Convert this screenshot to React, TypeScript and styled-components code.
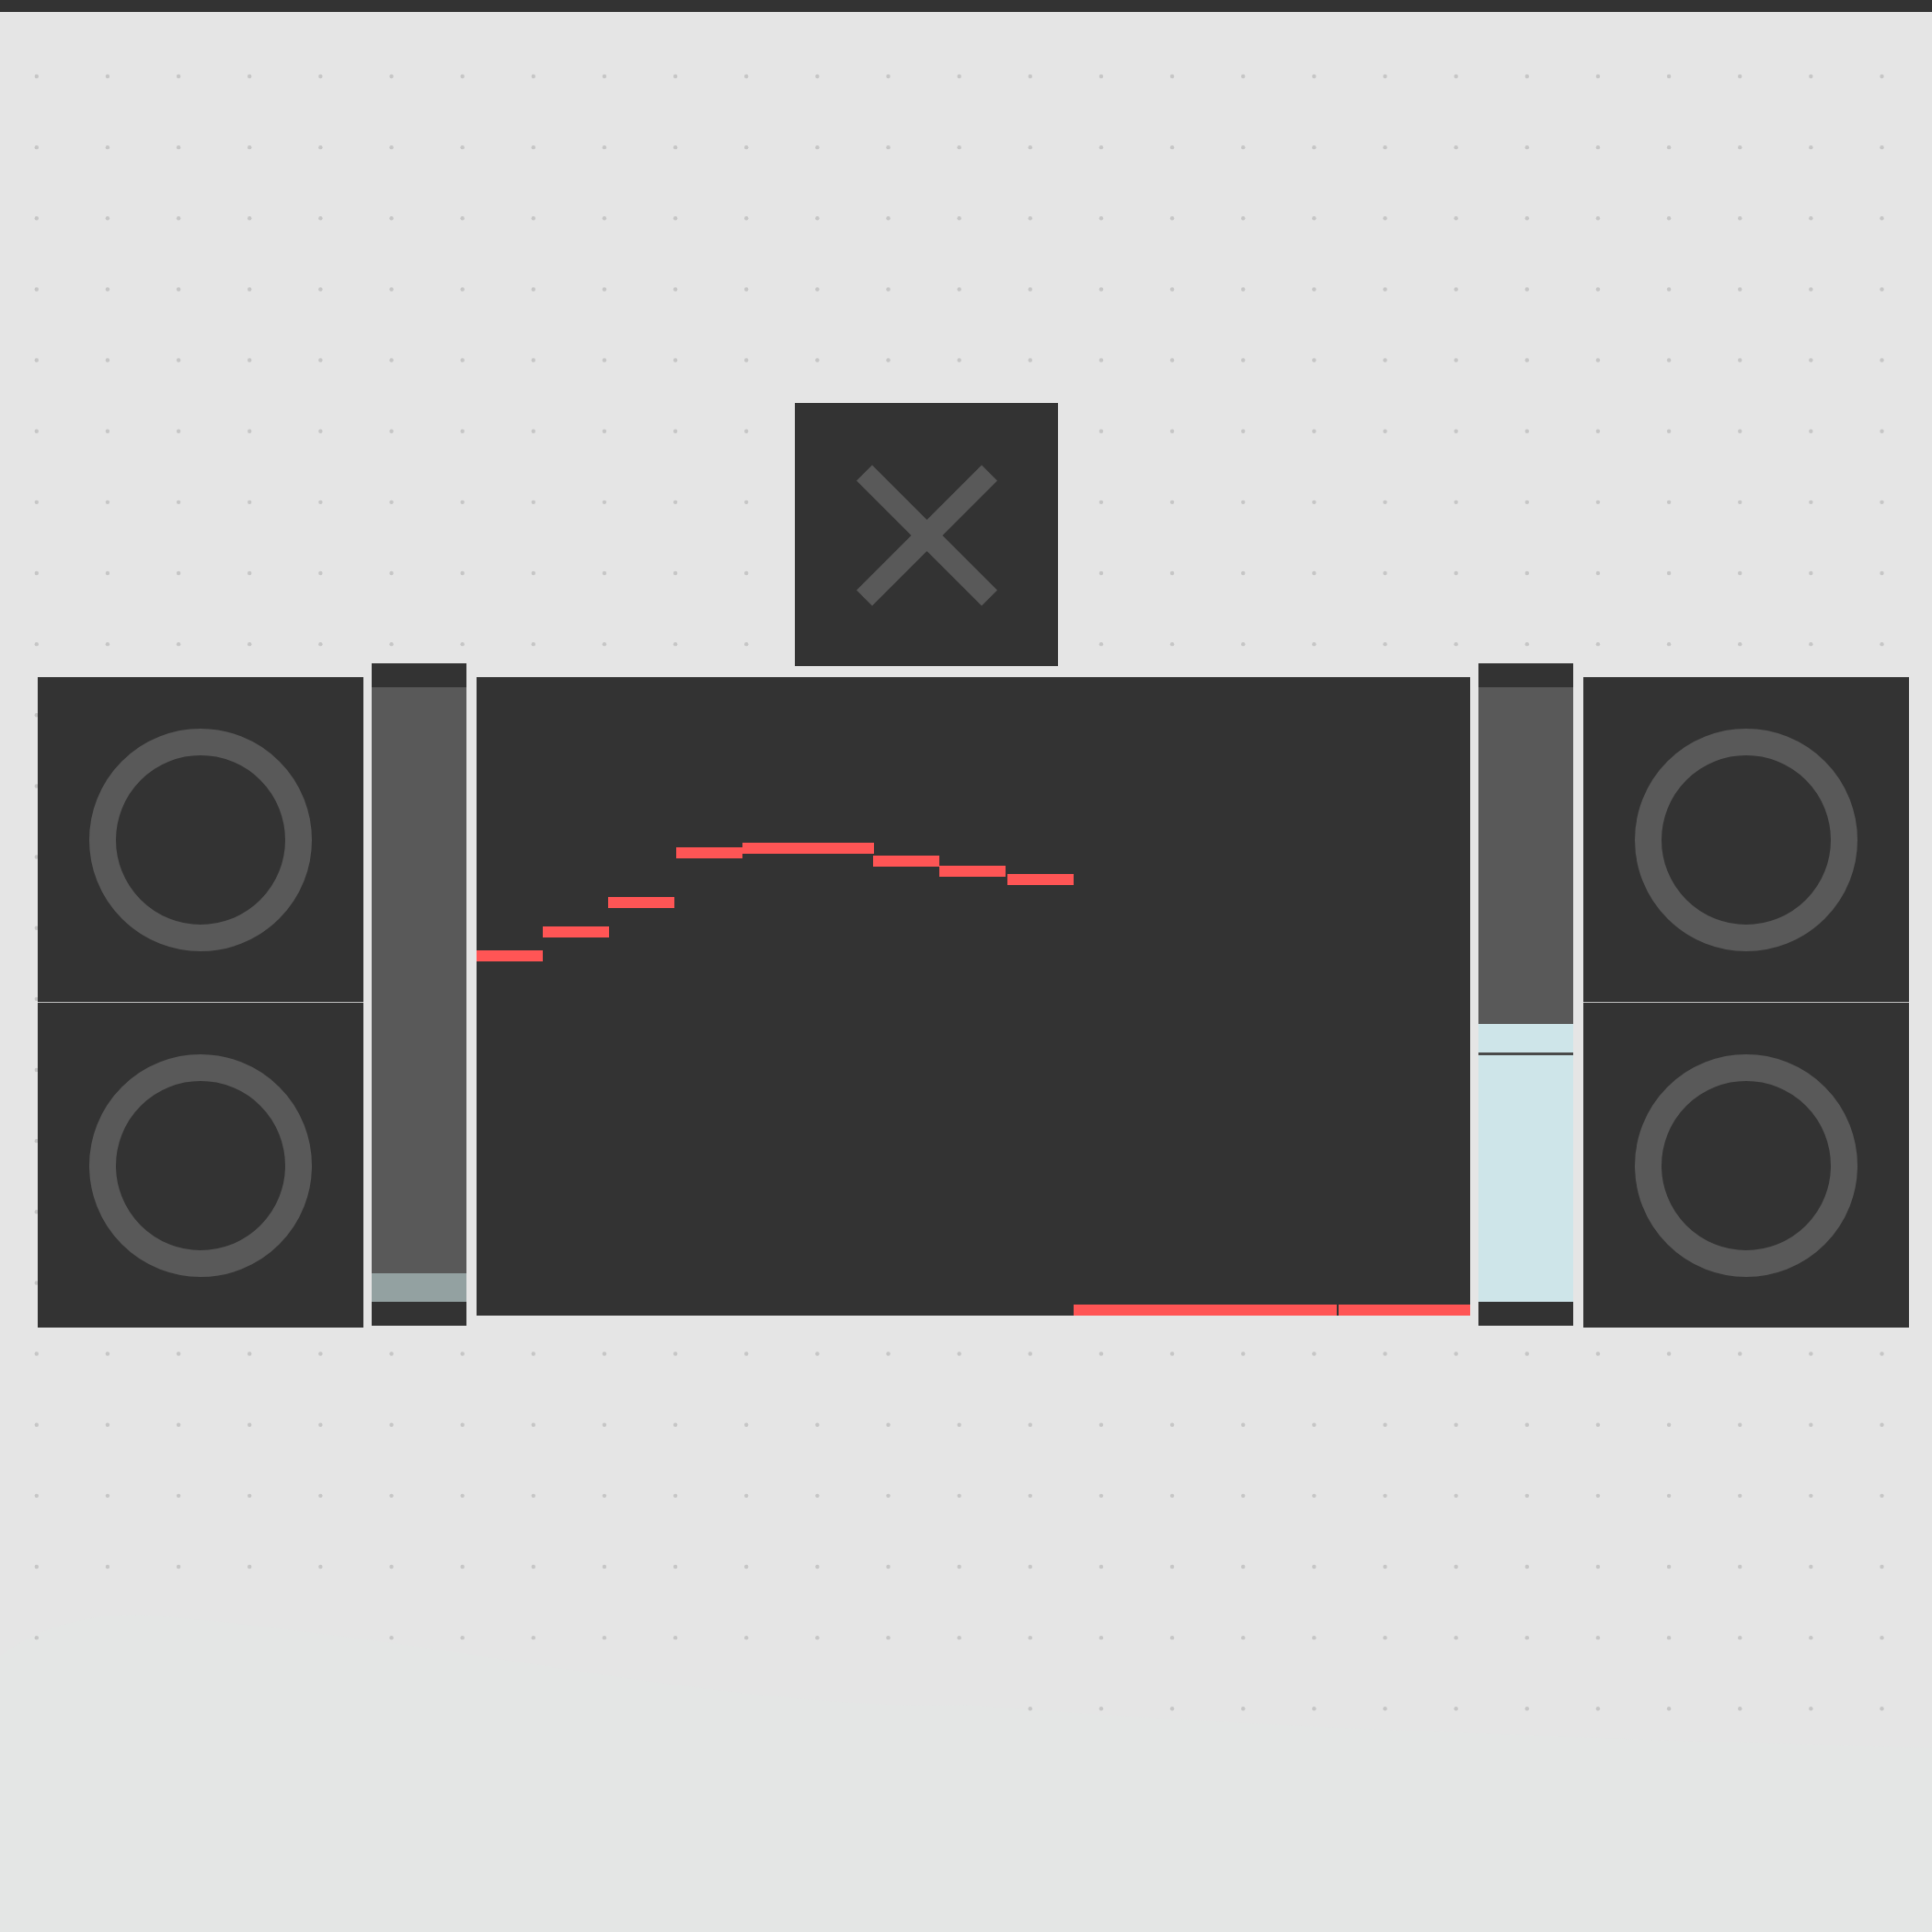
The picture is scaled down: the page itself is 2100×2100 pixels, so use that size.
import React, { useState } from "react";
import styled, { createGlobalStyle } from "styled-components";

const color = {
  page: "#e5e5e5",
  tint: "#e4e6e5",
  dot: "#c6c6c6",
  panel: "#333333",
  shape: "#595959",
  seam: "#c0c1c0",
  mark: "#4a4a4a",
  line: "#ff5555",
  fill: "#cee5e9",
  fillDim: "#93a1a1",
};

const GlobalStyle = createGlobalStyle`
  *, *::before, *::after { box-sizing: border-box; }
  body {
    margin: 0;
    background: ${color.page};
    font-family: "Liberation Sans", Arial, sans-serif;
  }
`;

const Page = styled.main`
  position: relative;
  min-height: 100vh;
  overflow: hidden;
  background: ${color.page};
`;

const Backdrop = styled.svg`
  position: absolute;
  inset: 0;
  width: 100%;
  height: 100%;
`;

const Content = styled.div`
  position: relative;
  display: flex;
  flex-direction: column;
`;

const TopBar = styled.header`
  height: 13px;
  background: ${color.panel};
`;

const ToggleRow = styled.div`
  display: flex;
  padding: 425px 0 12px 864px;
`;

const Toggle = styled.button`
  display: block;
  width: 286px;
  height: 286px;
  padding: 0;
  border: 0;
  background: ${color.panel};
  cursor: pointer;
`;

const Cross = styled.svg`
  display: block;
  width: 100%;
  height: 100%;
  stroke: ${color.shape};
  stroke-width: 24;
`;

const Deck = styled.section`
  display: flex;
  align-items: flex-start;
  gap: 11px;
  padding: 0 25px 0 41px;
`;

const Group = styled.div<{ $grow?: boolean }>`
  display: flex;
  align-items: flex-start;
  gap: 9px;
  flex: ${(p) => (p.$grow ? "1 1 0" : "0 0 auto")};
  min-width: 0;
`;

const PadColumn = styled.div`
  display: flex;
  flex-direction: column;
  gap: 1px;
  width: 354px;
  background: ${color.seam};
`;

const Pad = styled.button`
  display: flex;
  align-items: center;
  justify-content: center;
  height: 353px;
  padding: 0;
  border: 0;
  background: ${color.panel};
  cursor: pointer;
`;

const Ring = styled.span`
  width: 242px;
  height: 242px;
  border: 29px solid ${color.shape};
  border-radius: 50%;
`;

const Screen = styled.svg`
  display: block;
  flex: 1 1 0;
  min-width: 0;
  height: 694px;
  background: ${color.panel};
  fill: ${color.line};
`;

const Fader = styled.input<{ $level: number; $fill: string; $mark?: number }>`
  appearance: none;
  writing-mode: vertical-lr;
  direction: rtl;
  flex: none;
  width: 103px;
  height: 720px;
  margin: -15px 0 0;
  border: solid ${color.panel};
  border-width: 26px 0;
  background:
    ${(p) =>
      p.$mark
        ? `linear-gradient(to top, transparent ${p.$mark}px, ${color.mark} ${p.$mark}px ${p.$mark + 3}px, transparent ${p.$mark + 3}px),`
        : ""}
    linear-gradient(to top, ${(p) => p.$fill} ${(p) => p.$level}px, ${color.shape} ${(p) => p.$level}px);
  background-clip: padding-box;
  background-origin: padding-box;
  cursor: pointer;

  &::-webkit-slider-runnable-track { background: transparent; }
  &::-webkit-slider-thumb {
    appearance: none;
    width: 103px;
    height: 1px;
    background: transparent;
  }
`;

const DOT_STEP = 540 / 7;
const DOT_COLUMNS = 27;
const DOT_ROWS = 24;

// The tinted area at the foot of the page covers part of the last two rows.
const isCovered = (row: number, column: number) =>
  (row === DOT_ROWS - 2 && column > 0 && column < 5) ||
  (row === DOT_ROWS - 1 && column < 14);

const dots = Array.from({ length: DOT_ROWS * DOT_COLUMNS }, (_, i) => ({
  row: Math.floor(i / DOT_COLUMNS),
  column: i % DOT_COLUMNS,
})).filter((d) => !isCovered(d.row, d.column));

const steps = [
  { x: 0, y: 297, width: 72 },
  { x: 72, y: 271, width: 72 },
  { x: 143, y: 239, width: 72 },
  { x: 217, y: 185, width: 72 },
  { x: 289, y: 180, width: 143 },
  { x: 431, y: 194, width: 72 },
  { x: 503, y: 205, width: 72 },
  { x: 577, y: 214, width: 72 },
  { x: 649, y: 682, width: 286 },
  { x: 937, y: 682, width: 143 },
];

const FADER_RANGE = 668;

function DotGrid() {
  return (
    <Backdrop aria-hidden="true">
      <path
        fill={color.tint}
        d="M0 1800 Q60 1755 150 1755 Q300 1765 600 1812 T1050 1853 Q1400 1882 2100 1900 V2100 H0 Z"
      />
      {dots.map(({ row, column }) => (
        <circle
          key={`${row}-${column}`}
          cx={39.8 + column * DOT_STEP}
          cy={83 + row * DOT_STEP}
          r="2.2"
          fill={color.dot}
        />
      ))}
    </Backdrop>
  );
}

function Pads({ names }: { names: string[] }) {
  return (
    <PadColumn>
      {names.map((name) => (
        <Pad key={name} type="button" aria-label={name}>
          <Ring />
        </Pad>
      ))}
    </PadColumn>
  );
}

function Level({ name, start, fill, mark }: { name: string; start: number; fill: string; mark?: number }) {
  const [level, setLevel] = useState(start);
  return (
    <Fader
      type="range"
      aria-label={name}
      min={0}
      max={FADER_RANGE}
      value={level}
      onChange={(e) => setLevel(Number(e.target.value))}
      $level={level}
      $fill={fill}
      $mark={mark}
    />
  );
}

export default function App() {
  const [on, setOn] = useState(false);
  return (
    <Page>
      <GlobalStyle />
      <DotGrid />
      <Content>
        <TopBar />
        <ToggleRow>
          <Toggle type="button" aria-label="Toggle" aria-pressed={on} onClick={() => setOn(!on)}>
            <Cross viewBox="0 0 286 286">
              <path d="M75.5 76 L211.5 212 M211.5 76 L75.5 212" />
            </Cross>
          </Toggle>
        </ToggleRow>
        <Deck>
          <Group>
            <Pads names={["Left pad 1", "Left pad 2"]} />
            <Level name="Left level" start={31} fill={color.fillDim} />
          </Group>
          <Group $grow>
            <Screen viewBox="0 0 1080 694" preserveAspectRatio="none" role="img" aria-label="Step values">
              {steps.map((s) => (
                <rect key={s.x} x={s.x} y={s.y} width={s.width} height="12" />
              ))}
            </Screen>
            <Level name="Right level" start={302} fill={color.fill} mark={268} />
          </Group>
          <Pads names={["Right pad 1", "Right pad 2"]} />
        </Deck>
      </Content>
    </Page>
  );
}
